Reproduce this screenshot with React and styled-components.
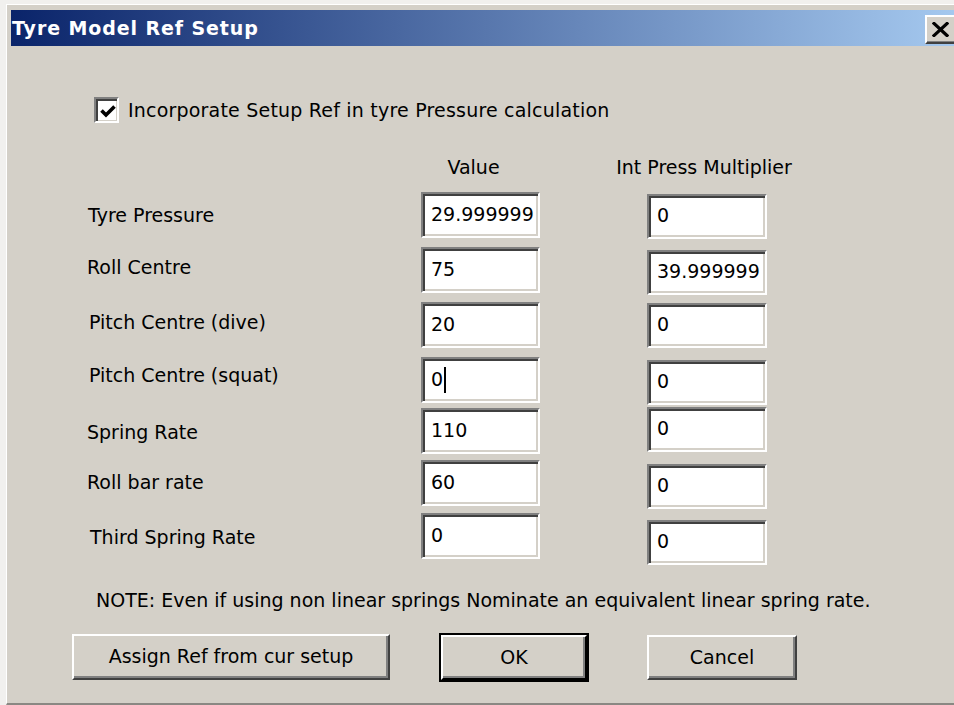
import React from "react";
import styled, { createGlobalStyle } from "styled-components";

const GlobalStyle = createGlobalStyle`
  html, body {
    margin: 0;
    padding: 0;
    background: #f1f0ee;
    overflow: hidden;
  }
  * { box-sizing: border-box; }
`;

const FONT = `"DejaVu Sans", Tahoma, Verdana, sans-serif`;

const Window = styled.div`
  margin: 4px 0 0 6px;
  width: 962px;
  height: 701px;
  background: #d4d0c8;
  border-top: 1px solid #ffffff;
  border-left: 1px solid #ffffff;
  border-bottom: 2px solid #8a8883;
  padding: 5px 4px 0 4px;
  font-family: ${FONT};
  font-size: 19px;
  color: #000;
  display: flex;
  flex-direction: column;
`;

const TitleBar = styled.div`
  height: 36px;
  display: flex;
  align-items: center;
  justify-content: space-between;
  padding-left: 1px;
  background: linear-gradient(to right, #0a246a 0%, #a6caf0 100%);
`;

const TitleText = styled.span`
  color: #ffffff;
  font-weight: bold;
  font-size: 19px;
  letter-spacing: 0.9px;
  line-height: 22px;
`;

const CloseButton = styled.div`
  width: 34px;
  height: 29px;
  margin-right: 5px;
  margin-top: 2px;
  background: #d4d0c8;
  border-top: 2px solid #ffffff;
  border-left: 2px solid #ffffff;
  border-right: 2px solid #404040;
  border-bottom: 2px solid #404040;
  box-shadow: inset -1px -1px 0 #808080;
  display: flex;
  align-items: center;
  padding-left: 5px;
`;

const Content = styled.div`
  display: flex;
  flex-direction: column;
`;

const CheckRow = styled.label`
  display: flex;
  align-items: center;
  margin: 51px 0 0 83px;
  height: 26px;
  gap: 9px;
`;

const CheckBox = styled.div`
  width: 25px;
  height: 26px;
  background: #ffffff;
  border-top: 2px solid #808080;
  border-left: 2px solid #808080;
  border-right: 2px solid #ffffff;
  border-bottom: 2px solid #ffffff;
  box-shadow: inset 2px 2px 0 #404040, inset -1px -1px 0 #d4d0c8;
  display: flex;
  align-items: center;
  justify-content: center;
  padding: 2px 0 0 2px;
`;

const CheckLabel = styled.span`
  line-height: 22px;
  letter-spacing: 0.2px;
`;

const Columns = `
  display: grid;
  grid-template-columns: 333px 119px 107px 120px;
  margin-left: 77px;
`;

const HeaderRow = styled.div`
  ${Columns}
  margin-top: 33px;
  height: 22px;
  line-height: 22px;
`;

const HeaderCell = styled.div`
  grid-column: ${(p) => p.$col};
  justify-self: center;
  white-space: nowrap;
  margin-left: ${(p) => p.$dx}px;
`;

const FieldRow = styled.div`
  ${Columns}
  height: 46px;
  margin-top: ${(p) => p.$gap}px;
`;

const RowLabel = styled.div`
  align-self: start;
  line-height: 22px;
  white-space: nowrap;
  margin-top: ${(p) => 12 + p.$dy}px;
  margin-left: ${(p) => p.$dx}px;
`;

const Field = styled.div`
  grid-column: ${(p) => p.$col};
  align-self: start;
  height: ${(p) => p.$h}px;
  margin-top: ${(p) => p.$dy}px;
  background: #ffffff;
  border-top: 2px solid #808080;
  border-left: 2px solid #808080;
  border-right: 2px solid #ffffff;
  border-bottom: 2px solid #ffffff;
  box-shadow: inset 2px 2px 0 #404040, inset -2px -2px 0 #d4d0c8;
  display: flex;
  align-items: center;
  padding: 0 0 3px 8px;
  line-height: 22px;
  white-space: nowrap;
  overflow: hidden;
`;

const Caret = styled.span`
  display: inline-block;
  width: 2px;
  height: 26px;
  background: #000;
  margin-left: 1px;
  margin-top: 3px;
`;

const Note = styled.div`
  margin: 30px 0 0 85px;
  line-height: 22px;
  white-space: nowrap;
`;

const ButtonRow = styled.div`
  display: flex;
  align-items: flex-start;
  margin: 23px 0 0 61px;
`;

const Button = styled.div`
  width: ${(p) => p.$w}px;
  height: ${(p) => p.$h}px;
  margin-left: ${(p) => p.$gap}px;
  margin-top: ${(p) => p.$dy || 0}px;
  background: #d4d0c8;
  display: flex;
  align-items: center;
  justify-content: center;
  line-height: 22px;
  padding-bottom: 2px;
  border-top: 2px solid #ffffff;
  border-left: 2px solid #ffffff;
  border-right: 2px solid #404040;
  border-bottom: 2px solid #404040;
  box-shadow: inset -2px -2px 0 #808080;
  ${(p) =>
    p.$default &&
    `
    outline: 2px solid #000;
    outline-offset: 0;
    border-right-color: #000;
    border-bottom-color: #000;
  `}
`;

const rows = [
  { label: "Tyre Pressure", value: "29.999999", mult: "0", gap: 14, ldy: 0, ldx: 0, mdy: 2 },
  { label: "Roll Centre", value: "75", mult: "39.999999", gap: 9, ldy: -3, ldx: -1, mdy: 3 },
  { label: "Pitch Centre (dive)", value: "20", mult: "0", gap: 9, ldy: -3, ldx: 1, mdy: 1 },
  { label: "Pitch Centre (squat)", value: "0", mult: "0", gap: 9, ldy: -5, ldx: 1, mdy: 3, caret: true },
  { label: "Spring Rate", value: "110", mult: "0", gap: 5, ldy: 1, ldx: -1, mdy: -1 },
  { label: "Roll bar rate", value: "60", mult: "0", gap: 6, ldy: -1, ldx: -1, mdy: 4 },
  { label: "Third Spring Rate", value: "0", mult: "0", gap: 7, ldy: 1, ldx: 2, mdy: 7 },
];

function CloseGlyph() {
  return (
    <svg width="17" height="15" viewBox="0 0 17 15">
      <path d="M2 1.5 L15 13.5 M15 1.5 L2 13.5" stroke="#000" strokeWidth="3.2" strokeLinecap="square" />
    </svg>
  );
}

function CheckMark() {
  return (
    <svg width="16" height="14" viewBox="0 0 16 14">
      <path d="M1.5 6.5 L6 11 L14.5 2.5" fill="none" stroke="#000" strokeWidth="3.6" />
    </svg>
  );
}

export default function App() {
  return (
    <>
      <GlobalStyle />
      <Window>
        <TitleBar>
          <TitleText>Tyre Model Ref Setup</TitleText>
          <CloseButton>
            <CloseGlyph />
          </CloseButton>
        </TitleBar>
        <Content>
          <CheckRow>
            <CheckBox>
              <CheckMark />
            </CheckBox>
            <CheckLabel>Incorporate Setup Ref in tyre Pressure calculation</CheckLabel>
          </CheckRow>

          <HeaderRow>
            <HeaderCell $col={2} $dx={-14}>Value</HeaderCell>
            <HeaderCell $col={4} $dx={-6}>Int Press Multiplier</HeaderCell>
          </HeaderRow>

          {rows.map((r) => (
            <FieldRow key={r.label} $gap={r.gap}>
              <RowLabel $dy={r.ldy} $dx={r.ldx}>{r.label}</RowLabel>
              <Field $col={2} $h={46} $dy={0}>
                {r.value}
                {r.caret && <Caret />}
              </Field>
              <Field $col={4} $h={45} $dy={r.mdy}>
                {r.mult}
              </Field>
            </FieldRow>
          ))}

          <Note>
            NOTE: Even if using non linear springs Nominate an equivalent linear spring rate.
          </Note>

          <ButtonRow>
            <Button $w={318} $h={46} $gap={0}>Assign Ref from cur setup</Button>
            <Button $w={146} $h={45} $gap={51} $dy={1} $default>OK</Button>
            <Button $w={150} $h={45} $gap={60} $dy={1}>Cancel</Button>
          </ButtonRow>
        </Content>
      </Window>
    </>
  );
}
